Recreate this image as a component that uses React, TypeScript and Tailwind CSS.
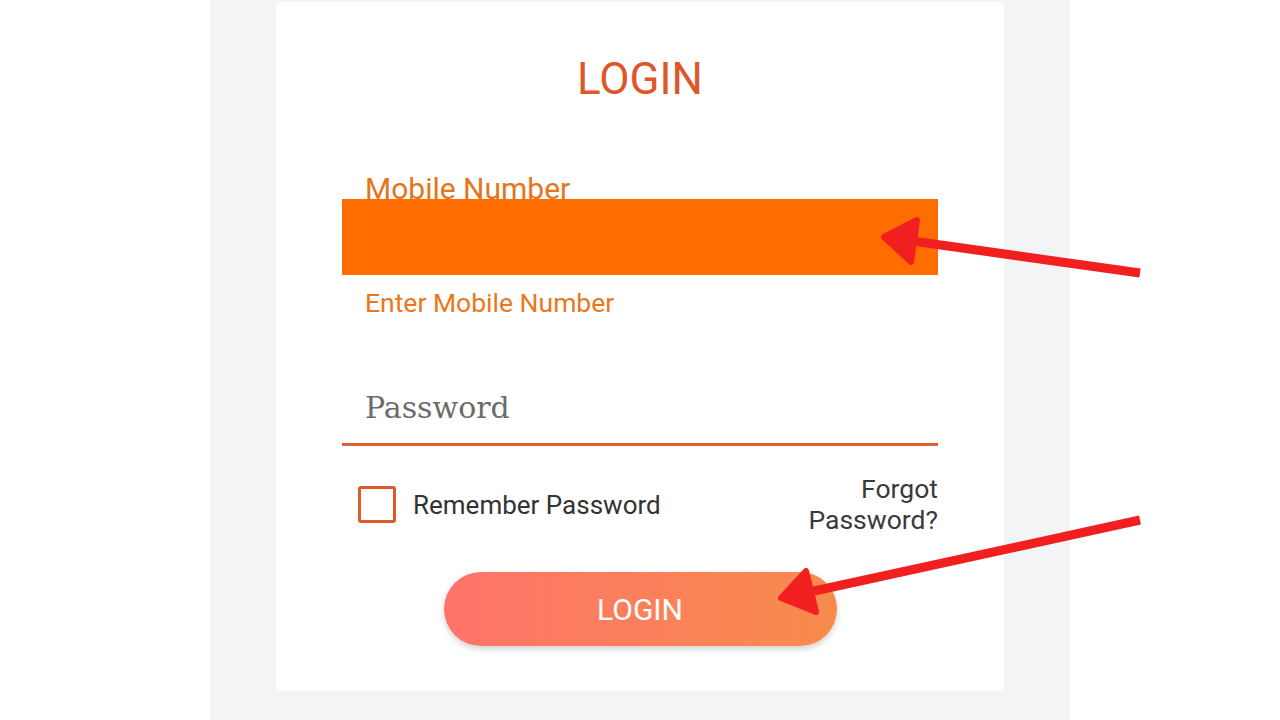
import React from 'react';

const Arrows = () => (
  <svg
    className="absolute inset-0 pointer-events-none"
    width="1280"
    height="720"
    viewBox="0 0 1280 720"
  >
    <g fill="#f11f1f" stroke="#f11f1f" strokeLinejoin="round">
      <line x1="1140" y1="273" x2="905" y2="240" strokeWidth="9" />
      <polygon points="884,237 917,220 911,262" strokeWidth="6" />
      <line x1="1140" y1="520" x2="805" y2="593" strokeWidth="9" />
      <polygon points="781,598 806,571 816,612" strokeWidth="6" />
    </g>
  </svg>
);

const App = () => {
  return (
    <div className="relative w-full h-[720px] bg-white flex justify-center overflow-hidden font-['Roboto','Liberation_Sans',sans-serif]">
      <div className="w-[860px] h-full bg-[#f3f4f6] flex justify-center">
        <div className="w-[728px] h-[689px] mt-[2px] bg-white rounded-[4px] px-[66px] pt-[55px] flex flex-col">
          <h1 className="text-center text-[44px] leading-[45px] text-[#df5628]">LOGIN</h1>

          {/* mobile number field */}
          <div className="mt-[72px] pl-[23px] h-[25px] text-[30px] leading-[30px] text-[#e5751a]">
            Mobile Number
          </div>
          <div className="h-[76px] w-full bg-[#ff6d00]" />
          <div className="mt-[15px] pl-[23px] text-[26.5px] leading-[26px] text-[#e8781b]">
            Enter Mobile Number
          </div>

          {/* password field */}
          <div className="mt-[77px] pl-[23px] pb-[20px] border-b-[3px] border-[#e2632f]">
            <div className="text-[30px] leading-[30px] text-[#6b6b6b] font-['DejaVu_Serif',serif]">
              Password
            </div>
          </div>

          <div className="mt-[27px] flex items-center justify-between">
            <label className="flex items-center ml-[16px]">
              <span className="w-[38px] h-[37px] border-[3px] border-[#df5a2b] rounded-[3px]" />
              <span className="ml-[17px] pt-[2px] text-[26px] text-[#333333]">Remember Password</span>
            </label>
            <div className="text-right text-[26.5px] leading-[31px] text-[#3a3a3a]">
              Forgot
              <br />
              Password?
            </div>
          </div>

          <button className="mt-[37px] mx-auto w-[393px] h-[74px] rounded-full bg-gradient-to-r from-[#fe7369] to-[#f78b4b] text-white text-[30px] shadow-[0_3px_6px_rgba(0,0,0,0.18)]">
            LOGIN
          </button>
        </div>
      </div>
      <Arrows />
    </div>
  );
};

export default App;
